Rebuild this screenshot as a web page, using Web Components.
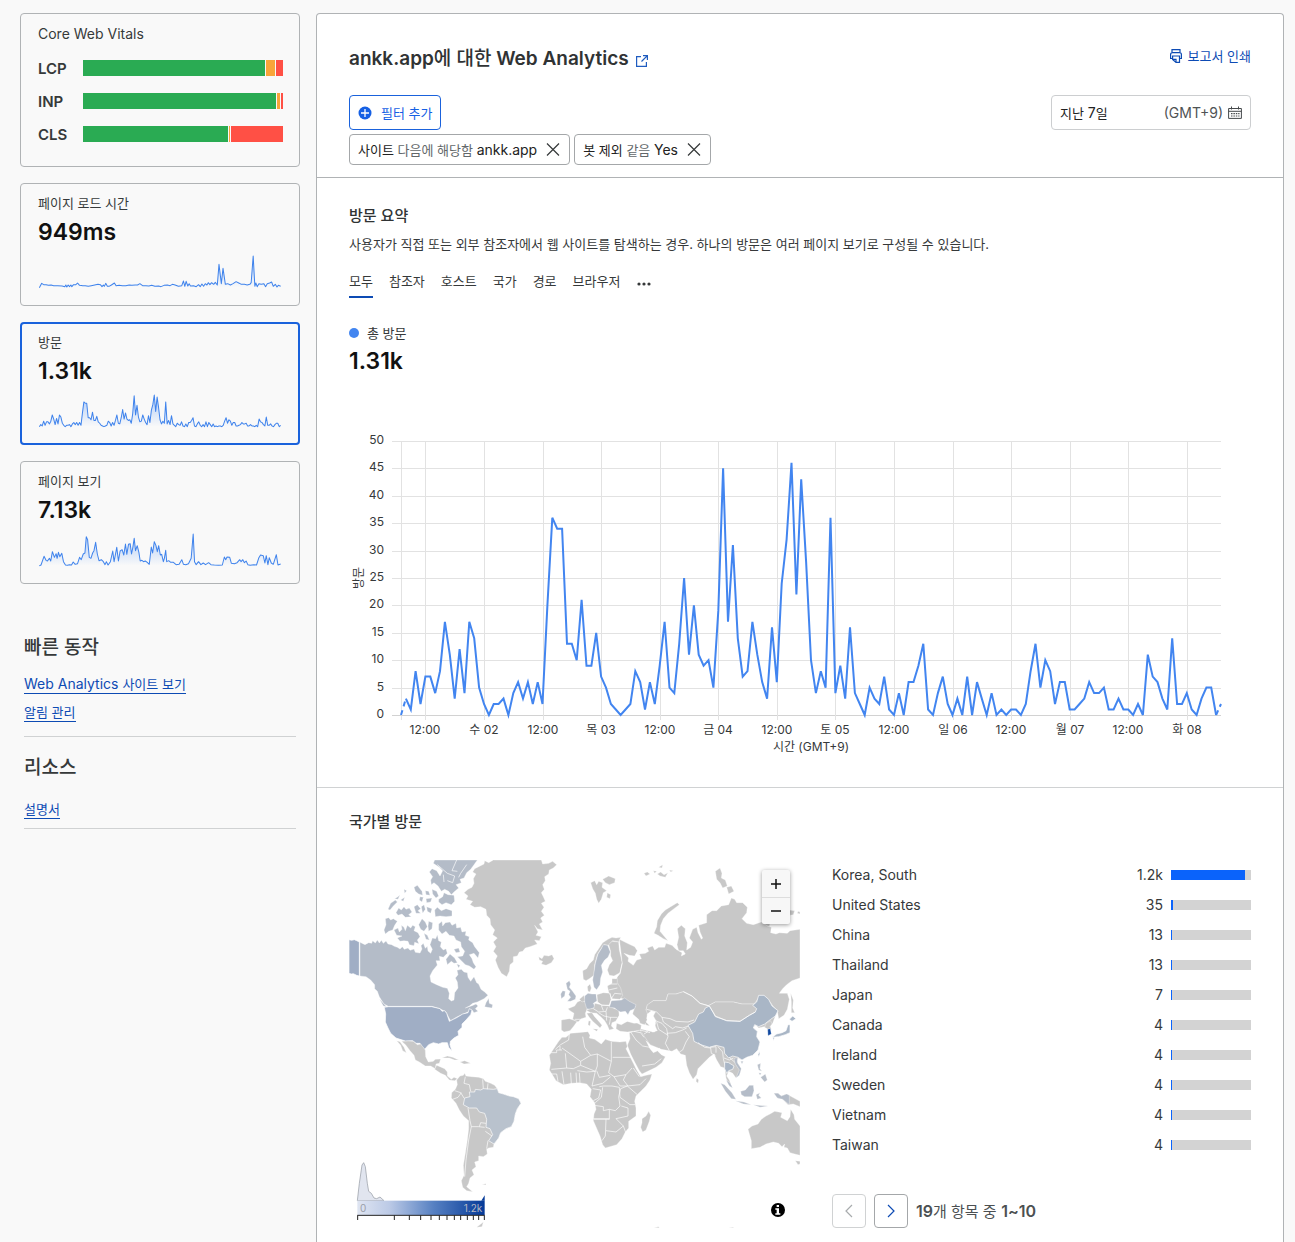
<!DOCTYPE html>
<html lang="ko">
<head>
<meta charset="utf-8">
<title>Web Analytics</title>
<style>
  html { background: #f9f9f9; }
  body { margin: 0; color: #36393a; font: 14px/20px Inter, "Noto Sans CJK KR", sans-serif; }
</style>
</head>
<body>
<analytics-page>
  <vitals-card slot="side"></vitals-card>
  <metric-card slot="side" label="페이지 로드 시간" value="949ms" series="load"></metric-card>
  <metric-card slot="side" label="방문" value="1.31k" series="visits" selected></metric-card>
  <metric-card slot="side" label="페이지 보기" value="7.13k" series="views"></metric-card>
  <side-links slot="side" heading="빠른 동작">
    <a href="#sites">Web Analytics <span>사이트 보기</span></a>
    <a href="#alerts"><span>알림 관리</span></a>
  </side-links>
  <side-links slot="side" heading="리소스" roomy>
    <a href="#docs"><span>설명서</span></a>
  </side-links>
  <report-header></report-header>
  <visit-summary></visit-summary>
  <country-visits></country-visits>
</analytics-page>

<script>
const base = `
  *, *::before, *::after { box-sizing: border-box; }
  h1, h2, h3, p { margin: 0; }
  button { font: inherit; color: inherit; margin: 0; padding: 0; background: none; border: 0; cursor: pointer; }
  svg { display: block; flex: none; }
  .ko { font-size: 13px; }
`;

class Component extends HTMLElement {
  constructor() { super(); this.attachShadow({ mode: 'open' }); }
  connectedCallback() {
    this.shadowRoot.innerHTML = `<style>${base}${this.css()}</style>${this.html()}`;
    this.ready();
  }
  css() { return ''; }
  html() { return ''; }
  ready() {}
}

const visits = [
  0,3,1,8,2,7,7,4,8,17,11,3,12,4,17,14,5,2,0,2,2,3,0,4,6,3,6,2,6,2,20,36,34,34,13,13,10,21,9,9,15,
  7,5,2,1,0,1,2,8,6,1,6,2,9,17,5,4,13,25,11,20,11,9,10,5,19,45,17,31,14,7,8,17,11,6,3,16,6,24,32,
  46,22,43,28,10,4,8,5,36,4,9,3,16,4,2,0,5,3,2,7,1,0,4,0,6,6,9,13,1,0,4,7,2,0,3,0,7,0,6,3,0,4,0,1,
  0,1,1,0,2,8,13,5,10,8,2,6,6,1,1,2,3,6,4,4,5,1,1,3,1,1,0,2,0,11,7,6,3,1,14,2,2,4,1,0,3,5,5,0,2];

/* Each series is a list of [x, y] with y measured up from the base line. */
const series = {
  visits: visits.map((v, i) => [i * 720 / 168, v * 95 / 46]),
  load: [0,0,7,13,13,9,20,9,27,7,35,8,43,6,55,6,68,5,76,3,79,8,82,2,86,8,90,3,94,8,97,3,102,9,109,9,114,14,
    120,7,130,6,137,6,146,4,155,6,165,8,175,10,182,9,187,3,191,8,194,4,198,13,203,4,208,4,215,8,224,14,229,6,
    238,7,248,6,258,6,268,8,276,7,286,8,293,8,300,12,308,6,318,6,327,5,335,7,345,4,356,5,363,3,372,7,382,8,
    390,6,397,10,405,8,415,4,425,6,430,20,434,4,438,19,443,5,447,12,451,5,460,6,468,3,475,9,480,3,485,11,
    490,4,495,12,500,8,504,15,509,9,514,15,520,10,525,16,531,8,536,70,543,12,548,58,555,10,562,12,570,8,
    578,12,587,18,595,14,603,10,612,10,620,8,628,10,632,15,638,95,643,4,646,14,650,3,655,12,662,10,670,12,
    675,3,680,12,687,14,693,17,698,4,704,10,709,2,713,7,720,4],
  views: [0,0,5,2,14,28,20,16,24,14,30,22,34,14,39,42,45,25,50,36,53,22,57,40,61,27,67,37,72,12,78,2,84,1,
    90,3,96,2,101,11,107,4,114,6,120,25,125,18,131,35,136,38,140,87,144,78,149,25,154,22,159,38,163,45,168,70,
    173,35,178,15,185,18,191,12,196,3,200,12,205,2,212,12,219,44,223,12,231,55,236,14,241,44,247,48,252,32,
    257,65,261,34,266,64,271,66,275,35,279,55,283,82,287,45,292,60,297,40,301,14,306,16,311,12,316,14,322,10,
    328,4,334,56,338,38,343,72,348,60,352,42,356,60,361,32,365,34,370,12,373,22,377,46,380,12,386,15,392,10,
    400,10,408,3,417,4,425,18,430,4,437,3,445,6,453,22,459,95,463,12,468,3,475,12,482,3,489,8,496,3,505,9,
    512,3,522,2,535,1,546,2,552,26,556,18,560,26,568,25,573,7,582,6,590,9,598,18,602,12,607,18,612,9,617,14,
    622,3,629,1,640,3,648,2,655,24,660,32,668,30,673,8,677,30,682,3,686,24,692,8,698,4,707,33,712,2,720,5]
};
for (const k of ['load', 'views']) {
  const flat = series[k];
  series[k] = flat.filter((_, i) => i % 2 === 0).map((x, i) => [x, flat[i * 2 + 1]]);
}

customElements.define('analytics-page', class extends Component {
  css() { return `
    :host { display: grid; grid-template-columns: 280px minmax(0, 1fr); gap: 16px;
      padding: 13px 11px 0 20px; min-height: 100vh; box-sizing: border-box; }
    aside { display: flex; flex-direction: column; gap: 16px; }
    main { background: #fff; border: 1px solid #b0b3b5; border-bottom: 0; border-radius: 4px 4px 0 0; min-width: 0; }`; }
  html() { return `<aside><slot name="side"></slot></aside><main><slot></slot></main>`; }
});

customElements.define('vitals-card', class extends Component {
  css() { return `
    :host { display: block; box-sizing: border-box; border: 1px solid #b0b3b5; border-radius: 4px; padding: 10px 16px 24px 17px; }
    h2 { font-size: 14px; font-weight: 400; line-height: 20px; margin-bottom: 16px; }
    dl { margin: 0; display: grid; grid-template-columns: 1fr 200px; row-gap: 17px; }
    dt { font-size: 15px; line-height: 18px; font-weight: 600; height: 16px; }
    dd { margin: 0; display: flex; gap: 1px; height: 16px; }
    i { background: #2aab53; } .mid { background: #f8a53a; } .bad { background: #ff5045; }`; }
  html() {
    const rows = [['LCP', 182, 9, 7], ['INP', 193, 3, 2], ['CLS', 145, 1, 52]];
    return `<h2>Core Web Vitals</h2><dl>${rows.map(([n, a, b, c]) =>
      `<dt>${n}</dt><dd><i style="flex:${a}"></i><i class="mid" style="flex:${b}"></i><i class="bad" style="flex:${c}"></i></dd>`).join('')}</dl>`;
  }
});

customElements.define('metric-card', class extends Component {
  css() { return `
    :host { display: block; box-sizing: border-box; border: 1px solid #b0b3b5; border-radius: 4px; padding: 9px 17px 15px; }
    :host([selected]) { border: 2px solid #1a62dc; padding: 8px 16px 14px; }
    h2 { font-size: 13px; line-height: 20px; font-weight: 400; }
    p { font-size: 23px; line-height: 32px; font-weight: 600; color: #111; margin: 3px 0 6px; }
    svg { width: 100%; height: 36px; }`; }
  html() {
    const pts = series[this.getAttribute('series')].map(([x, y]) => `${(x + 4).toFixed(1)},${(101 - y).toFixed(1)}`).join(' ');
    return `<h2>${this.getAttribute('label')}</h2><p>${this.getAttribute('value')}</p>
      <svg viewBox="0 0 728 108" preserveAspectRatio="none" aria-hidden="true">
      <defs><linearGradient id="g" x1="0" y1="0" x2="0" y2="1"><stop offset="0" stop-color="#3f86f5" stop-opacity=".4"/><stop offset="1" stop-color="#3f86f5" stop-opacity="0"/></linearGradient></defs>
      <polygon points="4,101 ${pts} 724,101" fill="url(#g)"/>
      <polyline points="${pts}" fill="none" stroke="#3f83ec" stroke-width="3" stroke-linejoin="round"/></svg>`;
  }
});

customElements.define('side-links', class extends Component {
  css() { return `
    :host { display: flex; flex-direction: column; align-items: flex-start; gap: 8px; margin: 35px 4px 0; padding-bottom: 14px;
      border-bottom: 1px solid #d0d2d3; }
    :host([roomy]) { margin-top: 0; padding-bottom: 9px; }
    h2 { font-size: 19px; line-height: 26px; font-weight: 500; margin-bottom: 5px; }
    :host([roomy]) h2 { margin: 2px 0 10px; }
    ::slotted(a) { color: #0d4bb4; text-decoration: none; border-bottom: 1px solid #0d4bb4; line-height: 19px; }`; }
  html() { return `<h2>${this.getAttribute('heading')}</h2><slot></slot>`; }
  ready() { this.querySelectorAll('span').forEach(s => { s.style.fontSize = '13px'; s.style.lineHeight = '1'; }); }
});

customElements.define('filter-chip', class extends Component {
  css() { return `
    :host { display: flex; align-items: center; gap: 8px; height: 31px; box-sizing: border-box; padding: 0 8px; border: 1px solid #a4a7a9; border-radius: 4px; color: #222; white-space: nowrap; }
    ::slotted(span) { font-size: 13px; } ::slotted(.op) { color: #62676a; }`; }
  html() { return `<div><slot></slot></div><button aria-label="필터 제거"><svg width="16" height="16" viewBox="0 0 16 16"><path d="M2 1.500 14 13.500M14 1.500 2 13.500" fill="none" stroke="#36393a" stroke-width="1.200"/></svg></button>`; }
});

customElements.define('report-header', class extends Component {
  css() { return `
    :host { display: flex; flex-direction: column; padding: 32px 32px 12px; border-bottom: 1px solid #b0b3b5; }
    .row { display: flex; justify-content: space-between; align-items: flex-start; }
    h1 { font-size: 19px; line-height: 25px; font-weight: 600; color: #303334; display: flex; align-items: center; gap: 6px; }
    h1 .ko { font-size: 19px; font-weight: 500; }
    h1 a { padding-top: 5px; }
    a { color: #0d4bb4; text-decoration: none; }
    .print { display: flex; align-items: center; gap: 5px; font-size: 13px; line-height: 20px; }
    .bar { margin-top: 24px; }
    .add { display: flex; align-items: center; gap: 9px; height: 35px; padding: 0 7px 0 8px; border: 1px solid #1a62dc; border-radius: 4px; color: #1560e4; font-size: 13px; }
    .date { width: 200px; height: 35px; display: flex; align-items: center; padding: 0 8px; border: 1px solid #ccced0; border-radius: 4px; color: #222; }
    .date .zone { margin-left: auto; margin-right: 5px; color: #505355; }
    .chips { display: flex; gap: 4px; margin-top: 4px; }`; }
  html() { return `
    <div class="row">
      <h1><span>ankk.app<span class="ko">에 대한</span> Web Analytics</span>
        <a href="#site" aria-label="사이트 열기"><svg width="14" height="14" viewBox="0 0 14 14" fill="none" stroke="#1f5cc0" stroke-width="1.200"><path d="M6 2.600H1.600V12.400H11.400V8M8 1.600H12.400V6M12.400 1.600 6.500 7.500"/></svg></a></h1>
      <a class="print" href="#print"><svg width="14" height="16" viewBox="0 0 14 16" fill="none" stroke="#0d4bb4" stroke-width="1.200"><path d="M3 4V1.600H11V4M3 10.500H1.600V6.500Q1.600 4.600 3.500 4.600H10.500Q12.400 4.600 12.400 6.500V10.500H11M3.600 8H10.500V14.400H7L3.600 11.500ZM3.800 11.300H7V14.200"/></svg>보고서 인쇄</a>
    </div>
    <div class="row bar">
      <button class="add"><svg width="14" height="14" viewBox="0 0 14 14"><circle cx="7" cy="7" r="6.500" fill="#1560e4"/><path d="M7 3V11M3 7H11" stroke="#fff" stroke-width="1.300"/></svg>필터 추가</button>
      <button class="date"><span><span class="ko">지난</span> 7<span class="ko">일</span></span><span class="zone">(GMT+9)</span><svg width="14" height="14" viewBox="0 0 14 14" fill="none" stroke="#45494b"><path d="M.6 2.500H13.400V12.400H.6ZM.6 5.300H13.400M3.500.5V3.500M10.500.5V3.500"/><path d="M3 7.700H11.500M3 10H11.500" stroke-width="1.200" stroke-dasharray="1.500 .9"/></svg></button>
    </div>
    <div class="chips">
      <filter-chip><span>사이트 </span><span class="op">다음에 해당함 </span>ankk.app</filter-chip>
      <filter-chip><span>봇 제외 </span><span class="op">같음 </span>Yes</filter-chip>
    </div>`; }
});

customElements.define('visits-chart', class extends Component {
  css() { return `
    :host { display: block; height: 355px; }
    svg { width: 100%; height: 355px; }
    text { font-size: 12px; fill: #36393a; }`; }
  html() { return `<svg role="img" aria-label="방문"></svg>`; }
  ready() {
    this.draw();
    new ResizeObserver(() => this.draw()).observe(this);
  }
  draw() {
    const w = this.clientWidth || 902, left = 52, right = w - 30, bottom = 315, unit = 274 / 50;
    const x = i => left + i * (right - left) / 168, y = v => bottom - v * unit;
    let s = '';
    for (let v = 0; v <= 50; v += 5) {
      const gy = Math.round(y(v)) + .5;
      s += `<path d="M43 ${gy}H${right}" stroke="${v ? '#e2e2e2' : '#d2d2d2'}"/><text x="35" y="${Math.round(y(v)) + 3}" text-anchor="end">${v}</text>`;
    }
    s += `<path d="M${left + .5} ${y(50)}V320" stroke="#e2e2e2"/>`;
    ['12:00', '수 02', '12:00', '목 03', '12:00', '금 04', '12:00', '토 05', '12:00', '일 06', '12:00', '월 07', '12:00', '화 08'].forEach((t, n) => {
      const gx = Math.round(x(5 + 12 * n));
      s += `<path d="M${gx + .5} ${y(50)}V320" stroke="#e2e2e2"/><text x="${gx}" y="334" text-anchor="middle">${t}</text>`;
    });
    const p = visits.map((v, i) => `${x(i).toFixed(1)},${y(v).toFixed(1)}`);
    s += `<g fill="none" stroke="#4285f0" stroke-width="2" stroke-linejoin="miter"><polyline points="${p.slice(1, -1).join(' ')}"/>
      <polyline points="${p.slice(0, 2).join(' ')}" stroke-dasharray="5 4"/><polyline points="${p.slice(-2).join(' ')}" stroke-dasharray="5 4"/></g>
      <text x="${(left + right) / 2}" y="351" text-anchor="middle">시간 (GMT+9)</text>
      <text transform="translate(14 178) rotate(-90)" text-anchor="middle">방문</text>`;
    this.shadowRoot.querySelector('svg').innerHTML = s;
  }
});

customElements.define('visit-summary', class extends Component {
  css() { return `
    :host { display: block; padding: 28px 32px 32px; border-bottom: 1px solid #d0d2d3; }
    h2 { font-size: 15px; line-height: 20px; font-weight: 500; color: #303334; }
    .desc { font-size: 13px; margin-top: 8px; }
    nav { display: flex; gap: 16px; margin-top: 17px; font-size: 13px; }
    nav button { padding-bottom: 5px; border-bottom: 2px solid transparent; line-height: 20px; }
    nav [aria-current] { border-color: #0d4bb4; }
    .legend { display: flex; align-items: center; gap: 8px; margin-top: 25px; font-size: 13px; }
    .legend i { width: 10px; height: 10px; border-radius: 50%; background: #4285f0; }
    .total { font-size: 23px; line-height: 30px; font-weight: 600; color: #111; margin: 3px 0 24px; }`; }
  html() { return `
    <h2>방문 요약</h2>
    <p class="desc">사용자가 직접 또는 외부 참조자에서 웹 사이트를 탐색하는 경우. 하나의 방문은 여러 페이지 보기로 구성될 수 있습니다.</p>
    <nav><button aria-current="true">모두</button>${['참조자', '호스트', '국가', '경로', '브라우저'].map(t => `<button>${t}</button>`).join('')}
      <button aria-label="더 보기"><svg width="16" height="16" viewBox="0 0 16 16" fill="#36393a"><circle cx="3" cy="11" r="1.600"/><circle cx="8" cy="11" r="1.600"/><circle cx="13" cy="11" r="1.600"/></svg></button></nav>
    <div class="legend"><i></i>총 방문</div>
    <p class="total">1.31k</p>
    <visits-chart></visits-chart>`; }
});

customElements.define('world-map', class extends Component {
  css() { return `
    :host { display: block; position: relative; }
    .map { width: 100%; height: auto; }
    .land { fill: #c8c8c8; stroke: #fff; stroke-width: 1; stroke-linejoin: round; }
    .line { fill: none; stroke: #fff; stroke-width: 2; }
    .ca { fill: #b4bcc8; } .us { fill: #a0aec5; } .br { fill: #b9c2cd; } .cn { fill: #a9b6c6; } .sea { fill: #fff; }
    .us, .cn, .br { stroke-width: 2; }
    .zoom { position: absolute; top: 10px; right: 10px; width: 28px; background: #f7f7f7; border-radius: 2px; box-shadow: 0 1px 4px rgba(0,0,0,.4); }
    .zoom button { display: flex; width: 28px; height: 27px; align-items: center; justify-content: center; }
    .zoom button + button { border-top: 1px solid #ddd; }`; }
  html() { return `
  <svg class="map" viewBox="27 30 1353 1104" role="img" aria-label="국가별 방문 지도">
    <defs><linearGradient id="scale"><stop offset="0" stop-color="#dfe5f2"/><stop offset=".25" stop-color="#bccae6"/><stop offset=".6" stop-color="#5680c2"/><stop offset="1" stop-color="#053a98"/></linearGradient></defs>
    <g class="land">
      <path class="us" d="M27 269 35 271 43 269 50 272 58 276V378L50 376 40 371 34 372 27 370Z"/>
      <path class="ca" d="M60 277 75 284 86 278 95 280 98 272 106 279 112 270 118 279 124 271 130 280 138 273 144 282 155 284 163 289 172 292 180 297 187 290 193 298 204 294 210 301 222 297 226 307 240 309 246 297 243 287 250 280 256 295 262 289 264 303 272 310 277 298 270 284 277 264 287 266 292 254 296 272 304 276 301 290 310 300 318 296 322 310 310 322 298 319 300 332 288 332 292 345 278 362 270 378 273 396 290 404 308 412 322 415 328 430 326 446 334 453 342 450 344 428 354 414 352 396 346 384 354 374 351 361 364 358 372 366 382 368 384 382 392 394 402 380 410 398 416 402 423 418 434 426 444 436 432 446 412 456 398 460 388 468 376 474 396 467 408 462 414 468 406 476 414 484 402 488 396 480 382 487 352 500 332 512 325 500 318 486 300 476 275 469H145L132 462 124 450 118 440 112 424 104 416 104 404 92 390 78 380 60 378Z"/>
      <path class="ca" d="M438 458 446 445 448 460 458 464 456 474 442 472 434 470ZM118 446 130 460 140 470 130 468Z"/>
      <path class="ca" d="M136 206 146 203 152 210 160 206 172 214 164 226 158 240 146 244 136 252 132 240 138 224Z"/>
      <path class="ca" d="M162 240 174 234 178 246 186 238 184 226 192 232 196 242 202 226 212 234 218 226 226 230 222 242 234 248 240 260 232 270 237 281 224 277 222 287 208 284 204 274 192 272 180 274 172 264 186 258 170 256Z"/>
      <path class="ca" d="M144 178 152 160 166 150 172 156 160 168 150 180ZM168 188 176 174 184 180 192 170 198 178 208 174 216 186 206 194 214 200 196 202 186 192 174 196ZM222 170 232 164 242 176 234 182 242 190 228 190ZM244 170 252 164 256 178 248 190ZM222 112 232 106 246 124 248 136 236 132 226 124ZM256 122 266 124 270 136 258 134ZM240 140 250 142 246 156 238 150ZM258 146 276 144 272 156 260 158ZM260 170 276 176 272 190 262 184ZM236 224 246 206 256 216 262 230 252 244 242 238ZM266 214 278 218 276 236 266 244 264 228ZM252 250 262 256 268 270 258 268ZM192 118 200 122 194 130ZM182 150 194 142 190 154ZM164 146 174 140 180 134 174 148Z"/>
      <path class="ca" d="M284 30H412L402 44 392 58 380 68 372 84 360 88 364 98 348 104 356 114 342 126 334 134 326 124 314 118 304 124 294 108 282 98 274 104 272 90 278 80 268 66 276 56 290 62 300 78 308 62 298 52 280 40Z"/>
      <path class="line" d="M292 44 322 70 344 78 338 98 322 92M350 30 336 62 352 64M310 74 312 96M380 44 362 70 356 82"/>
      <path class="ca" d="M296 148 308 140 312 128 324 134 342 136 344 154 334 164 318 158 306 164 296 156ZM276 118 290 124 296 138 288 144 278 132ZM284 180 292 172 304 182 318 176 336 182 336 198 318 200 300 198 286 200Z"/>
      <path class="ca" d="M296 222 306 214 308 228 316 218 330 216 336 226 348 220 350 234 362 232 366 246 378 244 376 256 388 260 386 270 398 278 404 290 418 308 414 324 402 310 388 314 396 326 400 338 408 350 402 358 388 348 376 344 364 332 352 320 368 318 374 304 364 290 362 276 348 270 342 258 328 256 318 244 306 252 296 240Z"/>
      <path class="ca" d="M318 328 330 312 344 324 352 338 342 340 334 334 322 344ZM342 298 356 294 360 306 348 308ZM350 342 360 346 356 354Z"/>
      <path d="M416 50 432 42 434 32 446 38 460 30H604L608 42 626 40 638 34 650 44 640 54 628 60 626 72 614 80 616 92 608 104 613 118 604 128 610 140 616 154 604 160 612 172 604 184 613 196 602 204 608 216 598 222 608 240 592 236 584 226 594 246 588 256 604 260 598 272 584 270 592 282 570 290 556 294 548 304 538 306 532 318 520 320 520 336 510 344 508 364 500 380 484 370 474 352 466 330 472 318 460 304 468 290 460 276 472 264 458 254 464 240 452 224 450 206 440 196 438 178 422 170 404 172 390 164 398 154 378 148 384 138 372 128 384 118 396 112 402 100 400 86 408 72 398 66 404 56Z"/>
      <path d="M596 320 606 326 612 316 626 318 636 314 642 326 634 338 618 346 604 342 608 334 598 330Z"/>
      <path class="us" d="M145 470H275L300 476 306 484 314 482 320 490 328 514 340 508 352 502 368 492 384 488 388 476 396 480 392 494 378 510 366 522 366 532 354 544 356 556 342 564 331 574 330 584 336 604 326 592 322 578 306 578 296 582 280 578 266 584 254 598 246 590 240 580 228 580 218 572 196 573 180 568 168 564 152 550 144 534 136 516 137 492 133 472Z"/>
      <path d="M185 574 205 573 220 574 232 584 242 582 256 600 257 620 265 636 280 634 286 628 302 627 298 640 288 642 286 656 272 648 256 648 238 636 226 630 222 616 210 602 198 586ZM170 572 180 575 192 592 199 608 188 602 182 586Z"/>
      <path d="M284 658 290 646 300 650 314 656 322 666 322 678 334 688 342 682 352 686 344 692 328 690 316 676 302 670Z"/>
      <path d="M306 624 322 618 338 622 356 630 344 630 328 624ZM360 636 374 632 392 640 372 642Z"/>
      <path d="M350 690 360 678 370 676 374 670 378 678 396 680 416 682 430 686 436 694 452 700 464 706 472 716 476 728 490 732 508 738 520 740 536 746 543 760 532 776 526 792 522 814 514 830 498 836 482 848 476 864 462 882 460 892 446 894 440 898 442 912 430 920 416 918 416 932 404 936 408 950 396 960 402 974 390 984 386 1000 380 1010 398 1025 380 1022 368 1012 364 992 372 976 370 946 376 910 382 870 386 836 386 812 370 798 358 780 348 760 334 744 335 728 346 718 352 704Z"/>
      <path class="br" d="M374 744 390 740 388 726 404 726 406 718 422 720 430 716 460 718 472 716 476 728 490 732 508 738 520 740 536 746 543 760 532 776 526 792 522 814 514 830 498 836 482 848 476 864 462 882 446 872 458 854 450 836 438 832 440 808 434 790 418 786 410 774 388 774 370 764Z"/>
      <path class="line" d="M376 680 372 700 388 704 392 724M428 688 430 716M444 700 442 718M344 722 362 728 372 744M338 748 354 742 364 728M384 774 390 812 394 830 386 870 378 930 374 980M394 830 416 830 434 832M418 830 422 818 438 820M436 844 456 858M444 872 440 896"/>
      <path d="M426 1003 438 1001 438 1005ZM410 1132 430 1116 426 1130Z"/>
    </g>
    <g class="land" transform="translate(600 0)">
      <path d="M152 98 164 92 170 104 176 94 188 98 186 112 200 122 190 128 184 148 176 160 170 148 166 130 158 116ZM188 88 206 78 226 86 224 98 208 104 196 98ZM202 128 212 134 210 146 200 142Z"/>
      <path d="M312 70 322 66 330 72 318 78ZM340 62 350 64 344 70ZM356 52 368 44 366 54ZM352 72 362 66 372 74 384 68 376 82 360 78ZM388 60 400 62 392 66Z"/>
      <path d="M526 64 540 54 546 70 544 84 556 90 562 108 548 114 540 98 530 88ZM560 112 574 108 582 124 566 132Z"/>
      <path d="M412 158 418 164 402 176 384 190 370 206 362 226 360 244 372 258 384 272 370 266 354 256 342 250 350 230 352 212 364 192 376 180 392 170Z"/>
      <path d="M748 180 764 182 760 194 750 196ZM668 218 690 220 688 230 672 228ZM774 184 780 186V192L772 190Z"/>
      <path d="M130 388 128 362 140 356 148 342 160 330 164 314 176 296 188 278 204 268 216 262 228 264 242 262 236 276 218 272 206 286 192 284 182 298 172 314 164 344 162 376 148 386 138 392Z"/>
      <path class="ca" d="M190 284 203 286 211 306 204 322 194 330 184 346 188 366 182 384 180 404 170 419 162 412 158 390 163 360 166 340 174 312 184 296Z"/>
      <path d="M206 284 216 274 236 276 238 300 247 340 240 368 222 378 208 376 202 360 208 344 218 332 212 318 212 304Z"/>
      <path d="M238 268 262 280 284 290 292 302 284 318 268 316 252 310 266 324 264 334 280 346 290 330 304 326 298 312 316 310 326 304 322 294 338 288 344 300 356 292 374 292 378 280 396 286 408 298 426 308 424 318 436 312 430 302 416 302 411 284 416 262 412 236 424 226 436 236 434 258 442 278 440 300 452 292 458 276 448 264 458 238 470 232 474 248 484 268 488 264 480 246 476 226 500 218 500 194 516 182 530 182 544 168 566 164 574 144 584 148 590 158 608 158 622 172 620 188 606 206 620 220 640 224 664 216 682 228 694 232 692 248 708 252 718 248 742 250 750 242 780 238V384L756 392 740 404 728 416 718 430 742 430 748 448 742 478 732 496 716 506 712 484 700 470 682 446 660 438 652 452 642 462 606 462 580 456 552 456 526 456 505 467 480 460 456 438 430 425 408 432 384 432 378 452 340 452 322 466 318 480 330 492 318 516 330 528 306 522 282 512 278 490 286 468 262 452 242 444 236 424 226 400 232 380 240 370 247 340Z"/>
      <path d="M318 480 322 464 340 452 378 452 384 432 408 432 430 425 456 438 480 460 505 467 526 456 552 456 580 456 606 462 642 462 660 438 682 446 700 470 714 484 706 498 698 520 690 528 694 538 684 534 672 530 656 534 646 524 640 534 652 544 650 560 660 576 654 600 638 616 620 622 606 630 594 624 590 634 602 654 600 670 588 684 578 670 566 664 560 678 568 690 576 712 566 704 558 684 554 654 542 650 530 630 522 612 508 622 488 642 474 656 470 674 459 688 448 668 440 646 436 616 422 612 410 596 396 604 364 598 330 584 316 568 302 552 300 536 330 544 344 546 346 520 326 500Z"/>
      <path d="M262 586 270 566 268 548 300 540 322 572 340 604 352 602 364 614 376 620 366 638 348 652 306 672 298 662 284 636 272 612Z"/>
      <path class="cn" d="M444 526 464 516 476 492 490 486 496 474 508 468 520 488 526 500 560 512 600 514 628 496 646 486 650 476 638 466 650 456 656 436 672 436 686 448 696 468 714 482 706 498 692 508 674 522 656 530 644 524 640 534 652 544 650 560 660 576 654 600 638 616 620 622 606 630 594 622 578 618 566 624 554 610 552 592 528 586 508 592 482 584 462 574 458 550Z"/>
      <path d="M678 520 692 512 696 522 690 530 694 538 684 538 674 532Z"/>
      <path d="M683 538 691 536 694 552 684 557Z" style="fill:#0f479f"/>
      <path class="line" d="M430 425 456 438 480 460 508 468 526 498 560 512 600 514 628 496 646 486M320 478 350 486 366 502 390 506 408 514 444 516 462 510M366 502 370 516 398 536 406 530 428 534 446 528M346 512 366 520 380 536 384 560 376 580 388 602M380 550 406 548 428 540 440 534M436 544 448 560 438 576 428 600 418 606M474 578 494 592 512 594 514 610 526 616M510 592 528 590 528 608M534 590 548 606 550 626 556 650M552 624 568 630 580 624M568 622 588 640 596 654M300 540 330 548M316 520 322 546 312 552M350 516 356 538 384 556"/>
      <path d="M230 520 244 524 262 514 290 518 304 526 302 540 280 544 262 546 240 544 228 536Z"/>
      <path d="M64 510 88 506 112 514 100 530 90 542 72 546 64 540ZM90 482 84 476 104 468 112 456 126 450 138 458 142 476 136 490 138 502 124 506 114 516 98 508 102 490Z"/>
      <path d="M118 448 132 436 136 452 126 456ZM142 410 150 402 154 414 150 426 144 424Z"/>
      <path class="ca" d="M134 438 144 430 156 432 168 432 172 452 160 460 166 472 150 478 140 476 134 456Z"/>
      <path d="M170 434 190 428 210 430 214 448 208 466 186 466 172 456ZM202 408 216 400 216 386 232 386 232 398 242 414 248 436 240 448 216 446 206 426ZM138 480 162 474 164 460 184 464 208 468 224 476 236 480 238 498 230 512 216 518 214 528 222 536 208 540 202 526 194 512 182 500 170 490 152 488Z"/>
      <path class="ca" d="M208 472 214 452 244 450 254 444 268 454 288 464 284 476 270 482 264 494 256 484 242 486 234 482 224 474Z"/>
      <path d="M140 490 156 488 164 500 180 518 186 526 180 534 174 528 158 514 148 502ZM158 536 174 538 170 544ZM146 512 152 514 150 528 144 524Z"/>
      <path class="line" d="M160 476 176 486 198 484 202 472M176 488 192 498 210 502 232 502M198 484 200 512M206 402 232 402M206 420 232 414M214 446 224 430 244 432M212 502 208 524M184 466 190 482M170 434 172 456 186 466 208 466 214 448 210 430M104 508 124 508M246 340 240 370 226 386"/>
      <path class="ca" d="M78 400 88 392 92 402 88 412 98 424 108 438 106 448 92 454 82 454 92 442 86 434 90 424 82 418ZM62 432 68 422 76 424 74 438 64 446Z"/>
      <path d="M66 562 78 562 92 550 112 548 144 545 150 556 148 564 164 568 184 582 196 568 214 574 240 576 258 574 262 590 258 596 268 616 280 640 288 656 302 680 318 676 336 672 330 690 318 708 300 726 288 738 284 754 288 774 288 798 266 814 266 834 256 846 246 866 230 884 196 894 188 884 180 858 160 812 162 792 168 778 164 758 150 740 154 718 140 702 118 698 94 700 70 704 48 692 38 676 28 660 32 640 28 616 44 592 56 574Z"/>
      <path class="line" d="M88 550 86 570 62 584 46 598M60 600V588M66 594 122 634 152 616 134 592 128 560M152 616 172 612 214 634V576M218 622H272M214 634 206 668 222 680 258 674 276 654M30 608H50V600H66M76 610 80 654 34 658M80 654 100 656 122 646 122 634M122 646 166 664 172 648 172 612M170 662 178 682 210 676M112 662 140 666 166 664 156 708M30 672H50L54 694M66 664 72 704M92 668 94 702M108 668 110 700M118 668 120 698M156 708 188 700 212 680M178 710 190 708 216 708 238 712 240 742M162 766 190 770 190 782 208 778 208 808H162M208 778 226 782 240 768 236 740 242 716 262 708 292 734M222 680 240 708 262 708 300 704 318 686M240 742 270 764 286 764M244 768 264 774 264 798 228 806M198 808 196 858 186 872M198 842 228 846 250 828 258 850M228 806 250 828M258 674 250 690 264 708M280 654 298 680M158 716 182 720 176 744 160 752M160 806H208M188 712 184 742 166 758"/>
      <path class="sea" d="M228 512 240 492 256 492 262 498 274 490 282 496 296 508 300 518 282 520 262 514 244 518ZM322 492 334 482 346 486 340 498 348 512 344 526 352 542 338 546 328 538 330 520 320 506Z"/>
      <path class="sea" d="M318 572 328 582 340 598 352 598 360 594 350 604 340 608 330 596Z"/>
      <path class="line" d="M272 546 288 570 308 588 330 592M282 544 300 548M306 648 344 642 364 626M300 546 312 562"/>
      <path d="M326 784 332 796 328 814 318 840 308 846 302 832 306 818 306 806 318 798ZM470 684 476 690 474 700 468 694Z"/>
      <path class="cn" d="M696 562 710 552 726 548 738 542 744 524 750 524 750 548 736 554 716 560ZM748 508 758 498 768 506 756 514ZM698 560 704 562 700 572ZM654 614 658 604 660 612 656 620Z"/>
      <path d="M752 430 760 450 758 474 764 488 754 488 754 456Z"/>
      <path class="cn" d="M554 636 566 638 582 648 578 658 566 662 560 670 554 656Z"/>
      <path class="ca" d="M582 626 592 622 592 638 604 656 598 676 588 684 598 660 586 642Z"/>
      <path class="ca" d="M558 690 570 698 578 714 568 708ZM602 724 616 720 628 706 640 706 642 722 636 740 614 740 604 734Z"/>
      <path d="M542 700 554 704 576 728 588 748 574 746 556 724ZM586 752 612 756 634 764 610 762ZM648 734 660 728 656 736 664 744 652 748ZM640 764 656 766 684 768 660 772ZM652 644 662 640 660 656 666 664 656 660ZM662 682 676 672 682 690 674 696ZM656 668 664 670 660 676ZM602 634 610 634 606 642Z" style="fill:#b8bfc9"/>
      <path d="M702 730 714 730 724 738 740 732 780 754V770L760 762 744 764 728 748 712 744Z"/>
      <path class="ca" d="M702 730 714 730 724 738 740 732 748 736V764L728 748 712 744Z"/>
      <path d="M624 838 636 828 654 822 664 808 678 798 690 792 704 784 716 786 726 788 722 802 742 812 750 800 752 778 762 794 764 808 780 828V916L764 912 750 908 742 894 732 892 734 882 726 890 716 880 700 876 678 882 660 892 634 896 634 872Z"/>
      <path d="M766 932 780 934V942L774 944ZM342 1132 356 1130 358 1134ZM566 1132 580 1132V1134ZM612 1131 622 1133Z"/>
    </g>
    <g>
      <path d="M52 1052 58 1000 66 945 71 938 76 950 82 1000 86 1024 94 1030 102 1044 110 1046 120 1041 132 1052Z" fill="#e1e5ef" stroke="#8f959f" stroke-width="2"/>
      <path d="M424 1052 434 1036V1052Z" fill="#053a98"/>
      <rect x="52" y="1052" width="382" height="43" fill="url(#scale)"/>
      <path d="M52 1096H434M53 1096V1110M163 1096V1110M208 1096V1110M242 1096V1110M273 1096V1110M298 1096V1110M321 1096V1110M343 1096V1110M362 1096V1110M382 1096V1110M400 1096V1110M416 1096V1110M433 1096V1110" stroke="#222" stroke-width="3"/>
      <text x="60" y="1086" font-size="30" fill="#9a9ea8">0</text><text x="427" y="1086" font-size="30" text-anchor="end" fill="#b5b9c4">1.2k</text>
      <circle cx="1314" cy="1080" r="21" fill="#000"/><path d="M1306 1075H1317V1090H1321V1094H1306V1090H1310V1079H1306ZM1310 1065H1317V1071H1310Z" fill="#fff"/>
    </g>
  </svg>
  <div class="zoom"><button aria-label="확대"><svg width="10" height="10"><path d="M5 0V10M0 5H10" stroke="#111" stroke-width="1.500"/></svg></button><button aria-label="축소"><svg width="10" height="10"><path d="M0 5H10" stroke="#111" stroke-width="1.500"/></svg></button></div>`; }
});

customElements.define('country-table', class extends Component {
  css() { return `
    :host { display: block; }
    table { width: 100%; border-collapse: collapse; }
    th, td { height: 30px; padding: 0; font-weight: 400; line-height: 20px; text-align: left; }
    .n { text-align: right; padding-right: 8px; }
    .b { width: 80px; }
    .b div { height: 10px; background: #d3d3d3; } .b i { display: block; height: 10px; background: #0a63fb; }
    .pages { display: flex; align-items: center; gap: 8px; margin-top: 34px; color: #4c5052; font-size: 16px; }
    .pages button { width: 34px; height: 34px; display: grid; place-items: center; border: 1px solid #a4a7a9; border-radius: 4px; color: #0d4bb4; }
    .pages button:disabled { border-color: #d0d2d3; color: #a8abad; }
    .ko { font-size: 15px; } b { font-weight: 600; }`; }
  html() {
    const rows = [['Korea, South', '1.2k', 74], ['United States', 35, 2], ['China', 13, 1], ['Thailand', 13, 1], ['Japan', 7, 1],
      ['Canada', 4, 1], ['Ireland', 4, 1], ['Sweden', 4, 1], ['Vietnam', 4, 1], ['Taiwan', 4, 1]];
    return `<table>${rows.map(([c, n, w]) => `<tr><th scope="row">${c}</th><td class="n">${n}</td><td class="b"><div><i style="width:${w}px"></i></div></td></tr>`).join('')}</table>
      <div class="pages"><button disabled aria-label="이전"><svg width="16" height="16" viewBox="0 0 16 16" fill="none" stroke="currentColor" stroke-width="1.200"><path d="M11 2 5 8 11 14"/></svg></button>
      <button aria-label="다음"><svg width="16" height="16" viewBox="0 0 16 16" fill="none" stroke="currentColor" stroke-width="1.200"><path d="M5 2 11 8 5 14"/></svg></button>
      <span><b>19</b><span class="ko">개 항목 중</span> <b>1~10</b></span></div>`;
  }
});

customElements.define('country-visits', class extends Component {
  css() { return `
    :host { display: block; padding: 24px 32px 14px; }
    h2 { font-size: 15px; line-height: 20px; font-weight: 500; color: #303334; margin-bottom: 28px; }
    .cols { display: grid; grid-template-columns: 451fr 419fr; gap: 32px; align-items: start; }`; }
  html() { return `<h2>국가별 방문</h2><div class="cols"><world-map></world-map><country-table></country-table></div>`; }
});
</script>
</body>
</html>
